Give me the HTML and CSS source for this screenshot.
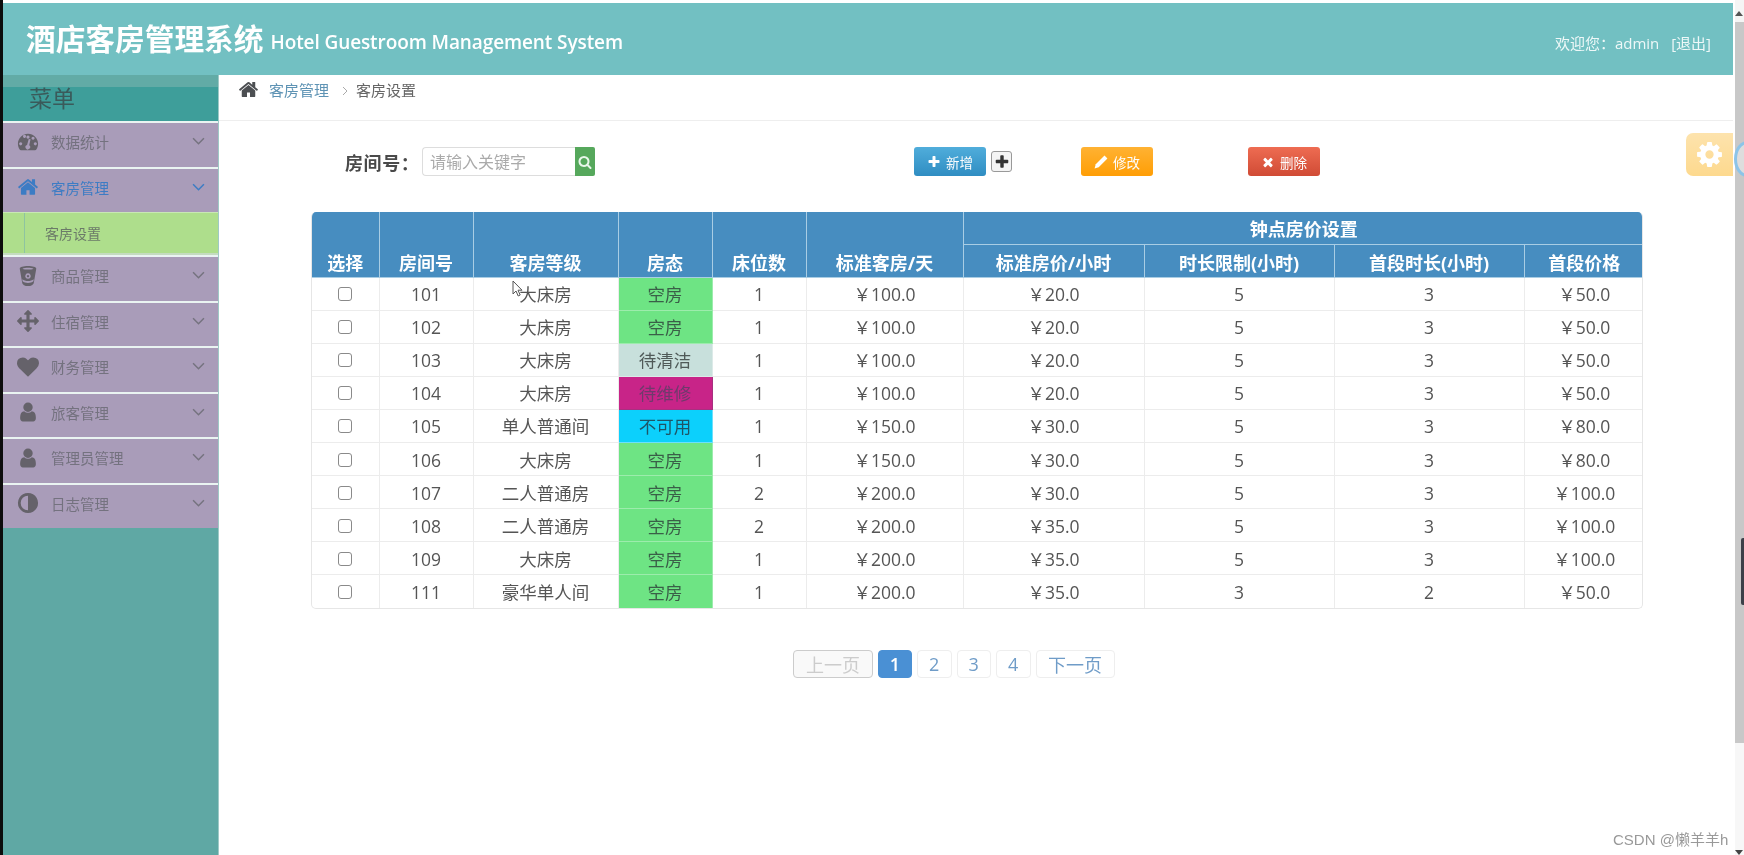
FILE: index.html
```html
<!DOCTYPE html>
<html lang="zh">
<head>
<meta charset="utf-8">
<title>酒店客房管理系统</title>
<link rel="stylesheet" href="styles.css">
</head>
<body>
<svg class="sprite" aria-hidden="true">
  <symbol id="i-home" viewBox="0 0 1792 1792"><path d="M1472 992v480q0 26-19 45t-45 19h-384v-384h-256v384h-384q-26 0-45-19t-19-45v-480q0-1 .5-3t.5-3l575-474 575 474q1 2 1 6zm223-69l-62 74q-8 9-21 11h-3q-13 0-21-7l-692-577-692 577q-12 8-24 7-13-2-21-11l-62-74q-8-10-7-23.500t11-21.500l719-599q32-26 76-26t76 26l244 204v-195q0-14 9-23t23-9h192q14 0 23 9t9 23v408l219 182q10 8 11 21.500t-7 23.500z"/></symbol>
  <symbol id="i-plus" viewBox="0 0 1792 1792"><path d="M1600 736v192q0 40-28 68t-68 28h-416v416q0 40-28 68t-68 28h-192q-40 0-68-28t-28-68v-416h-416q-40 0-68-28t-28-68v-192q0-40 28-68t68-28h416v-416q0-40 28-68t68-28h192q40 0 68 28t28 68v416h416q40 0 68 28t28 68z"/></symbol>
  <symbol id="i-heart" viewBox="0 0 1792 1792"><path d="M896 1664q-26 0-44-18l-624-602q-10-8-27.500-26t-55.500-65.500-68-97.500-53.500-121-23.500-138q0-220 127-344t351-124q62 0 126.500 21.500t120 58 95.500 68.500 76 68q36-36 76-68t95.500-68.500 120-58 126.500-21.500q224 0 351 124t127 344q0 221-229 450l-623 600q-18 18-44 18z"/></symbol>
  <symbol id="i-user" viewBox="0 0 1792 1792"><path d="M1536 1399q0 109-62.500 187t-150.500 78h-854q-88 0-150.500-78t-62.500-187q0-85 8.500-160.500t31.500-152 58.500-131 94-89 134.500-34.500q131 128 313 128t313-128q76 0 134.500 34.500t94 89 58.500 131 31.500 152 8.500 160.500zm-256-887q0 159-112.500 271.500t-271.500 112.500-271.500-112.500-112.500-271.500 112.500-271.500 271.500-112.500 271.500 112.500 112.500 271.500z"/></symbol>
  <symbol id="i-times" viewBox="0 0 1792 1792"><path d="M1490 1322q0 40-28 68l-136 136q-28 28-68 28t-68-28l-294-294-294 294q-28 28-68 28t-68-28l-136-136q-28-28-28-68t28-68l294-294-294-294q-28-28-28-68t28-68l136-136q28-28 68-28t68 28l294 294 294-294q28-28 68-28t68 28l136 136q28 28 28 68t-28 68l-294 294 294 294q28 28 28 68z"/></symbol>
  <symbol id="i-arrows" viewBox="0 0 1792 1792"><path d="M1792 896q0 26-19 45l-256 256q-19 19-45 19t-45-19-19-45v-128h-384v384h128q26 0 45 19t19 45-19 45l-256 256q-19 19-45 19t-45-19l-256-256q-19-19-19-45t19-45 45-19h128v-384h-384v128q0 26-19 45t-45 19-45-19l-256-256q-19-19-19-45t19-45l256-256q19-19 45-19t45 19 19 45v128h384v-384h-128q-26 0-45-19t-19-45 19-45l256-256q19-19 45-19t45 19l256 256q19 19 19 45t-19 45-45 19h-128v384h384v-128q0-26 19-45t45-19 45 19l256 256q19 19 19 45z"/></symbol>
  <symbol id="i-search" viewBox="0 0 1792 1792"><path d="M1216 832q0-185-131.500-316.500t-316.500-131.500-316.500 131.500-131.500 316.500 131.500 316.500 316.500 131.500 316.500-131.500 131.500-316.500zm512 832q0 52-38 90t-90 38q-54 0-90-38l-343-342q-179 124-399 124-143 0-273.500-55.500t-225-150-150-225-55.500-273.500 55.500-273.500 150-225 225-150 273.500-55.500 273.500 55.500 225 150 150 225 55.500 273.500q0 220-124 399l343 343q37 37 37 90z"/></symbol>
  <symbol id="i-cog" viewBox="0 0 1792 1792"><path d="M1152 896q0-106-75-181t-181-75-181 75-75 181 75 181 181 75 181-75 75-181zm512-109v222q0 12-8 23t-20 13l-185 28q-19 54-39 91 35 50 107 138 10 12 10 25t-9 23q-27 37-99 108t-94 71q-12 0-26-9l-138-108q-44 23-91 38-16 136-29 186-7 28-36 28h-222q-14 0-24.500-8.500t-11.500-21.500l-28-184q-49-16-90-37l-141 107q-10 9-25 9-14 0-25-11-126-114-165-168-7-10-7-23 0-12 8-23 15-21 51-66.500t54-70.500q-27-50-41-99l-183-27q-13-2-21-12.500t-8-23.500v-222q0-12 8-23t19-13l186-28q14-46 39-92-40-57-107-138-10-12-10-24 0-10 9-23 26-36 98.500-107.500t94.500-71.500q13 0 26 10l138 107q44-23 91-38 16-136 29-186 7-28 36-28h222q14 0 24.500 8.500t11.500 21.500l28 184q49 16 90 37l142-107q9-9 24-9 13 0 25 10 129 119 165 170 7 8 7 22 0 12-8 23-15 21-51 66.500t-54 70.500q26 50 41 98l183 28q13 2 21 12.500t8 23.500z"/></symbol>
  <symbol id="i-pencil" viewBox="0 0 24 24"><path d="M18 1l5 5-15 15-7 2 2-7z"/></symbol>
  <symbol id="i-gauge" viewBox="0 0 24 24"><path fill-rule="evenodd" d="M12 3C5.900 3 1 7.900 1 14c0 2.300.7 4.400 1.900 6.200.3.500.8.800 1.400.800h15.400c.6 0 1.100-.3 1.400-.8C22.300 18.400 23 16.300 23 14c0-6.100-4.900-11-11-11zM6.500 5.800a1.700 1.700 0 1 1 0 .01zM12 5a1.700 1.700 0 1 1-.01 0zM4 12.300a1.700 1.700 0 1 1-.01 0zM17.500 6.200a1.700 1.700 0 1 1-.01 0zM20 12.300a1.700 1.700 0 1 1-.01 0zM14.800 9l-1.500 6.600a2.500 2.500 0 1 1-2.300-.4L12.800 8.600z"/></symbol>
  <symbol id="i-bucket" viewBox="0 0 24 24"><path fill-rule="evenodd" d="M12 1c5 0 9 1 9 3l-2.600 15c-.2 2.300-3 4-6.400 4s-6.200-1.700-6.400-4L3 4c0-2 4-3 9-3zM6 4c1.500.8 3.600 1 6 1s4.500-.2 6-1c-1.500-.8-3.600-1-6-1s-4.500.2-6 1zm6 5a3 3 0 1 0 .01 0zm0 1.800a1.300 1.300 0 1 1-.01 0zM5.800 15.500c1.600 1.300 3.800 2 6.200 2s4.600-.7 6.200-2l-.3 2.200c-1.400 1.200-3.500 1.800-5.900 1.800s-4.500-.6-5.900-1.800z"/></symbol>
  <symbol id="i-adjust" viewBox="0 0 24 24"><path fill-rule="evenodd" d="M12 1a11 11 0 1 1-.01 0zm0 3a8 8 0 0 0 0 16z"/></symbol>
</svg>

<div class="screen">
  <div class="edge"></div>
  <div class="app">
    <header class="topbar">
      <h1 class="brand">酒店客房管理系统</h1>
      <span class="brand-en">Hotel Guestroom Management System</span>
      <div class="welcome">欢迎您：admin <span class="logout">[退出]</span></div>
    </header>
    <div class="body">
      <aside class="sidebar">
        <div class="menu-title"><span>菜单</span></div>
        <nav class="menu">
          <a class="item"><svg class="ico"><use href="#i-gauge"/></svg><span class="item-label">数据统计</span><svg class="chev" viewBox="0 0 12 8"><path d="M1 1l5 5 5-5"/></svg></a>
          <a class="item open"><svg class="ico"><use href="#i-home"/></svg><span class="item-label">客房管理</span><svg class="chev" viewBox="0 0 12 8"><path d="M1 1l5 5 5-5"/></svg></a>
          <a class="sub"><span class="sub-rail"></span><span>客房设置</span></a>
          <a class="item"><svg class="ico"><use href="#i-bucket"/></svg><span class="item-label">商品管理</span><svg class="chev" viewBox="0 0 12 8"><path d="M1 1l5 5 5-5"/></svg></a>
          <a class="item"><svg class="ico"><use href="#i-arrows"/></svg><span class="item-label">住宿管理</span><svg class="chev" viewBox="0 0 12 8"><path d="M1 1l5 5 5-5"/></svg></a>
          <a class="item"><svg class="ico"><use href="#i-heart"/></svg><span class="item-label">财务管理</span><svg class="chev" viewBox="0 0 12 8"><path d="M1 1l5 5 5-5"/></svg></a>
          <a class="item"><svg class="ico"><use href="#i-user"/></svg><span class="item-label">旅客管理</span><svg class="chev" viewBox="0 0 12 8"><path d="M1 1l5 5 5-5"/></svg></a>
          <a class="item"><svg class="ico"><use href="#i-user"/></svg><span class="item-label">管理员管理</span><svg class="chev" viewBox="0 0 12 8"><path d="M1 1l5 5 5-5"/></svg></a>
          <a class="item"><svg class="ico"><use href="#i-adjust"/></svg><span class="item-label">日志管理</span><svg class="chev" viewBox="0 0 12 8"><path d="M1 1l5 5 5-5"/></svg></a>
        </nav>
      </aside>
      <main class="main">
        <div class="crumbs">
          <svg class="crumb-home"><use href="#i-home"/></svg>
          <a class="crumb-link">客房管理</a>
          <svg class="crumb-sep" viewBox="0 0 6 10"><path d="M1 1l4 4-4 4"/></svg>
          <span class="crumb-now">客房设置</span>
        </div>
        <div class="toolbar">
          <label class="search-label">房间号：</label>
          <div class="search-box">
            <input class="search-input" placeholder="请输入关键字">
            <span class="search-btn"><svg><use href="#i-search"/></svg></span>
          </div>
          <button class="btn btn-add"><svg><use href="#i-plus"/></svg>新增</button>
          <span class="plus-box"><svg><use href="#i-plus"/></svg></span>
          <button class="btn btn-edit"><svg><use href="#i-pencil"/></svg>修改</button>
          <button class="btn btn-del"><svg><use href="#i-times"/></svg>删除</button>
        </div>
        <div class="table-wrap">
          <table class="rooms">
            <colgroup>
              <col class="c1"><col class="c2"><col class="c3"><col class="c4"><col class="c5"><col class="c6"><col class="c7"><col class="c8"><col class="c9"><col class="c10">
            </colgroup>
            <thead>
              <tr>
                <th rowspan="2">选择</th><th rowspan="2">房间号</th><th rowspan="2">客房等级</th><th rowspan="2">房态</th><th rowspan="2">床位数</th><th rowspan="2">标准客房/天</th>
                <th colspan="4">钟点房价设置</th>
              </tr>
              <tr><th>标准房价/小时</th><th>时长限制(小时)</th><th>首段时长(小时)</th><th>首段价格</th></tr>
            </thead>
            <tbody>
              <tr><td><span class="check"></span></td><td>101</td><td>大床房</td><td class="st-free">空房</td><td>1</td><td>￥100.0</td><td>￥20.0</td><td>5</td><td>3</td><td>￥50.0</td></tr>
              <tr><td><span class="check"></span></td><td>102</td><td>大床房</td><td class="st-free">空房</td><td>1</td><td>￥100.0</td><td>￥20.0</td><td>5</td><td>3</td><td>￥50.0</td></tr>
              <tr><td><span class="check"></span></td><td>103</td><td>大床房</td><td class="st-clean">待清洁</td><td>1</td><td>￥100.0</td><td>￥20.0</td><td>5</td><td>3</td><td>￥50.0</td></tr>
              <tr><td><span class="check"></span></td><td>104</td><td>大床房</td><td class="st-fix">待维修</td><td>1</td><td>￥100.0</td><td>￥20.0</td><td>5</td><td>3</td><td>￥50.0</td></tr>
              <tr><td><span class="check"></span></td><td>105</td><td>单人普通间</td><td class="st-off">不可用</td><td>1</td><td>￥150.0</td><td>￥30.0</td><td>5</td><td>3</td><td>￥80.0</td></tr>
              <tr><td><span class="check"></span></td><td>106</td><td>大床房</td><td class="st-free">空房</td><td>1</td><td>￥150.0</td><td>￥30.0</td><td>5</td><td>3</td><td>￥80.0</td></tr>
              <tr><td><span class="check"></span></td><td>107</td><td>二人普通房</td><td class="st-free">空房</td><td>2</td><td>￥200.0</td><td>￥30.0</td><td>5</td><td>3</td><td>￥100.0</td></tr>
              <tr><td><span class="check"></span></td><td>108</td><td>二人普通房</td><td class="st-free">空房</td><td>2</td><td>￥200.0</td><td>￥35.0</td><td>5</td><td>3</td><td>￥100.0</td></tr>
              <tr><td><span class="check"></span></td><td>109</td><td>大床房</td><td class="st-free">空房</td><td>1</td><td>￥200.0</td><td>￥35.0</td><td>5</td><td>3</td><td>￥100.0</td></tr>
              <tr><td><span class="check"></span></td><td>111</td><td>豪华单人间</td><td class="st-free">空房</td><td>1</td><td>￥200.0</td><td>￥35.0</td><td>3</td><td>2</td><td>￥50.0</td></tr>
            </tbody>
          </table>
        </div>
        <nav class="pager">
          <a class="pg pg-prev">上一页</a>
          <a class="pg pg-on">1</a>
          <a class="pg pg-num">2</a>
          <a class="pg pg-num">3</a>
          <a class="pg pg-num">4</a>
          <a class="pg pg-next">下一页</a>
        </nav>
      </main>
    </div>
  </div>
  <div class="scrollbar">
    <span class="sb-up"></span>
    <div class="sb-track"></div>
    <div class="sb-rest"><span class="sb-down"></span></div>
  </div>
</div>

<div class="gear"><svg><use href="#i-cog"/></svg></div>
<div class="float-ring"></div>
<div class="sb-thumb"></div>
<svg class="cursor" viewBox="0 0 12 18"><path d="M1 1v13l3-3 2.200 5 2-1-2.200-4.800H10z"/></svg>
<div class="watermark">CSDN @懒羊羊h</div>
</body>
</html>
```
FILE: styles.css
```css
* { box-sizing: border-box; }
html, body { margin: 0; padding: 0; width: 1744px; height: 855px; overflow: hidden; background: #fff; }
body { font-family: "Open Sans", "Noto Sans CJK SC", sans-serif; color: #555; position: relative; filter: blur(.35px); }
.sprite { display: none; }

.screen { display: flex; width: 1744px; height: 855px; }
.edge { width: 3px; background: #0c0c0c; flex: none; }
.app { width: 1730px; flex: none; display: flex; flex-direction: column; padding-top: 3px; }

.topbar { height: 72px; flex: none; background: #72c0c2; display: flex; align-items: center; padding: 0 22px 0 23px; color: #fff; }
.brand { margin: 0; font-size: 29.700px; font-weight: 700; line-height: 1; white-space: nowrap; }
.brand-en { margin-left: 7px; font-size: 19px; font-weight: 600; padding-top: 5px; white-space: nowrap; letter-spacing: -.1px; }
.welcome { margin-left: auto; font-size: 15px; color: #eef8f8; white-space: nowrap; word-spacing: 4px; padding-top: 6px; }
.logout { margin-left: 4px; }

.body { flex: 1; display: flex; min-height: 0; }
.sidebar { width: 216px; flex: none; background: #5fa8a4; border-right: 1px solid #9fc9c6; }
.menu-title { height: 46px; background: linear-gradient(#62aba6 0, #62aba6 12px, #3e9e9a 12px, #3e9e9a 100%); padding: 8px 0 0 26px; font-size: 23px; line-height: 30px; color: #3a5a5a; }
.menu { display: flex; flex-direction: column; }
.item { height: 45.500px; display: flex; align-items: center; padding-bottom: 6px; background: #a99cb9; border-top: 2px solid #eaf4f2; color: #74727f; font-size: 14.500px; }
.ico { width: 22px; height: 22px; fill: #65626a; margin-left: 14px; flex: none; }
.item-label { margin-left: 12px; flex: 1; }
.chev { width: 13px; height: 9px; margin-right: 13px; fill: none; stroke: #75737f; stroke-width: 1.400; flex: none; }
.open { color: #3d7cc4; }
.open .ico { fill: #3d7cc4; }
.open .chev { stroke: #3d7cc4; }
.sub { height: 43px; display: flex; align-items: center; background: #aede8c; color: #6b7a68; font-size: 14px; border-top: 1px solid #c8e8b4; border-bottom: 2px solid #c4dcc0; }
.sub-rail { width: 1px; height: 100%; margin-left: 21px; margin-right: 20px; background: #8ec4a0; }

.main { flex: 1; min-width: 0; background: #fff; }
.crumbs { height: 46px; display: flex; align-items: flex-start; padding: 5px 0 0 18px; border-bottom: 1px solid #eee; font-size: 15px; line-height: 20px; }
.crumb-home { width: 23px; height: 21px; fill: #4c4f52; margin-top: -1px; }
.crumb-link { margin-left: 9px; color: #5e93b4; }
.crumb-sep { width: 6px; height: 10px; margin: 6px 8px 0 13px; fill: none; stroke: #aaa; stroke-width: 1; }
.crumb-now { color: #666; }

.toolbar { height: 29px; margin-top: 26px; display: flex; align-items: center; padding-left: 126px; }
.search-label { font-size: 18px; font-weight: 700; color: #4a4a4a; width: 77px; white-space: nowrap; letter-spacing: .6px; }
.search-box { display: flex; width: 173px; height: 29px; }
.search-input { flex: 1; min-width: 0; height: 29px; border: 1px solid #ddd; border-right: 0; border-radius: 4px 0 0 4px; padding: 0 7px; font: 16px "Open Sans", "Noto Sans CJK SC", sans-serif; outline: 0; }
.search-input::placeholder { color: #aaa; opacity: 1; }
.search-btn { width: 20px; background: #56a85c; display: flex; align-items: center; justify-content: center; border-radius: 0 2px 2px 0; }
.search-btn svg { width: 14px; height: 14px; fill: #e8f6ea; }
.btn { height: 29px; width: 72px; border: 0; border-radius: 3px; color: #fdfdfd; font: 13.500px "Open Sans", "Noto Sans CJK SC", sans-serif; display: flex; align-items: center; justify-content: center; gap: 5px; padding: 0; }
.btn svg { width: 14px; height: 14px; fill: #fff; }
.btn-add { margin-left: 319px; background: linear-gradient(#50addb, #2f8dc2); }
.btn-edit { margin-left: 69px; background: linear-gradient(#ffb233, #ff9e05); }
.btn-del { margin-left: 95px; background: linear-gradient(#ee6c52, #d04b35); }
.plus-box { width: 21px; height: 21px; margin-left: 5px; border: 1px solid #999; border-radius: 3px; background: #f4f4f4; display: flex; align-items: center; justify-content: center; }
.plus-box svg { width: 16px; height: 16px; fill: #333; }

.table-wrap { width: 1332px; margin: 36px 0 0 92px; border: 1px solid #e6e6e6; border-top: 0; border-radius: 5px; overflow: hidden; }
.rooms { width: 100%; table-layout: fixed; border-collapse: collapse; }
.c1 { width: 67px; } .c2 { width: 94px; } .c3 { width: 145px; } .c4 { width: 94px; } .c5 { width: 94px; }
.c6 { width: 157px; } .c7 { width: 181px; } .c8 { width: 190px; } .c9 { width: 190px; } .c10 { width: 120px; }
.rooms th { background: #478dc0; color: #fff; font-size: 18px; font-weight: 700; height: 32.500px; padding: 0 0 2px; border: 1px solid #a9cde4; border-top: 0; vertical-align: bottom; line-height: 24px; }
.rooms thead tr:first-child th[colspan] { vertical-align: middle; padding: 2px 0 0; }
.rooms th:first-child, .rooms td:first-child { border-left: 0; }
.rooms th:last-child, .rooms td:last-child { border-right: 0; }
.rooms td { height: 33.100px; padding: 1px 0 0; text-align: center; font-size: 17.500px; line-height: 20px; border: 1px solid #ececec; color: #555; }
.rooms tr:last-child td { border-bottom: 0; }
.check { display: inline-block; width: 14px; height: 14px; border: 1.500px solid #8a8a8a; border-radius: 3px; background: #fff; vertical-align: -1px; margin-bottom: 1px; }
.rooms .st-free { background: #6ee484; color: #3a5f48; border-color: #9cecac; }
.rooms .st-clean { background: #c8e0dc; color: #4f5a58; border-color: #dceae8; }
.rooms .st-fix { background: #c82488; color: #6f3a6c; border-color: #a83080; }
.rooms .st-off { background: #0cd0fc; color: #1f5566; border-color: #6ce0fc; }

.pager { display: flex; gap: 5px; margin: 41px 0 0 574px; align-items: stretch; height: 28px; }
.pg { border: 1px solid #eee; border-radius: 4px; display: flex; align-items: center; justify-content: center; font-size: 18px; color: #6f9cc8; width: 34.500px; padding-top: 1px; }
.pg-prev { width: 80px; color: #ccc; border-color: #ccc; background: #f9f9f9; }
.pg-next { width: 79px; }
.pg-on { width: 34px; background: #4a90d4; border-color: #4a90d4; color: #fff; font-weight: 600; }

.scrollbar { width: 9px; margin-left: 2px; flex: none; display: flex; flex-direction: column; }
.sb-up { height: 22px; position: relative; background: #f5f5f5; flex: none; }
.sb-up::after { content: ""; position: absolute; left: 0; top: 11px; border: 4px solid transparent; border-top: 0; border-bottom: 5px solid #555; }
.sb-track { height: 721px; background: #c8c8c8; flex: none; }
.sb-rest { flex: 1; background: #f7f7f7; position: relative; }
.sb-down { position: absolute; left: 0; bottom: 0; border: 4px solid transparent; border-bottom: 0; border-top: 5px solid #444; }

.gear { position: absolute; left: 1686px; top: 133px; width: 47px; height: 43px; background: linear-gradient(#fde3ad, #fdd98e); border-radius: 7px 0 0 7px; display: flex; align-items: center; justify-content: center; }
.gear svg { width: 29px; height: 29px; fill: #fff; }
.float-ring { position: absolute; left: 1734px; top: 141px; width: 26px; height: 36px; border-radius: 50%; border: 3px solid #8cc4e8; background: #ddd; }
.sb-thumb { position: absolute; left: 1741px; top: 538px; width: 3px; height: 67px; background: #3c4048; border-radius: 2px 0 0 2px; }
.cursor { position: absolute; left: 512px; top: 280px; width: 12px; height: 18px; fill: #fff; stroke: #555; stroke-width: 1; }
.watermark { position: absolute; left: 1613px; top: 828px; font: 15px "Liberation Sans", "Noto Sans CJK SC", sans-serif; color: #999; white-space: nowrap; }
```
